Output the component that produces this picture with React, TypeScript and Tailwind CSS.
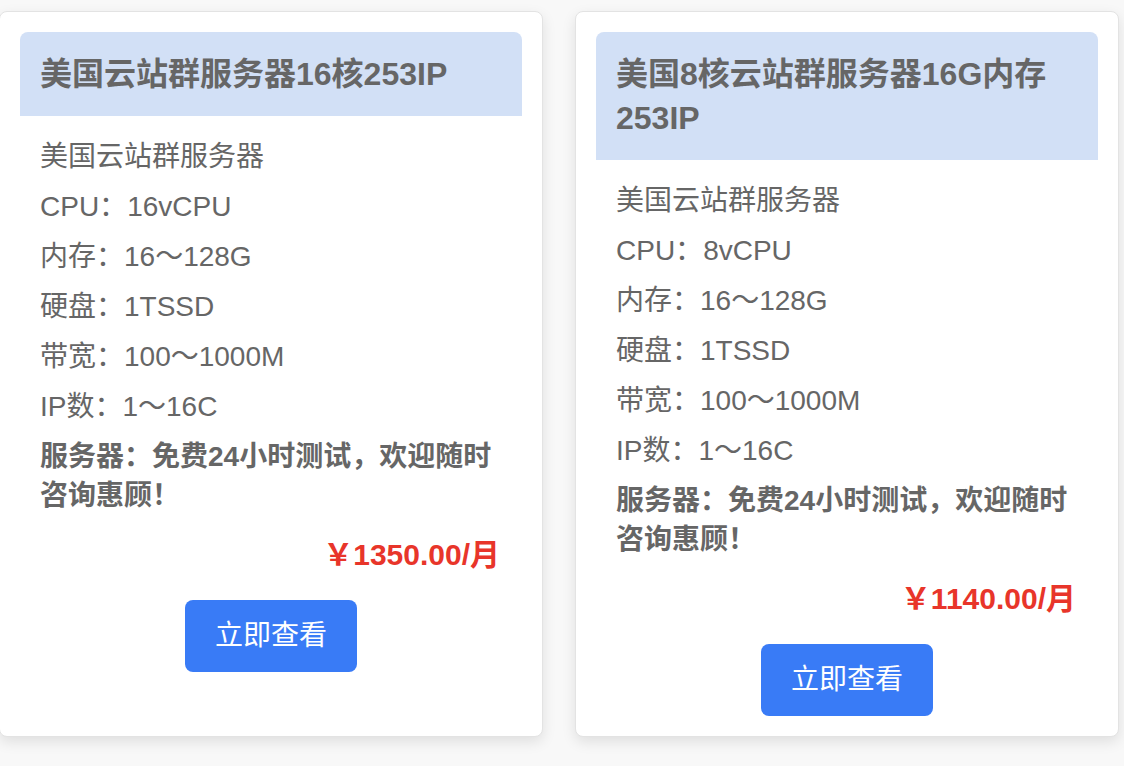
import React from "react";

type Plan = {
  title: string;
  cpu: string;
  price: string;
};

const plans: Plan[] = [
  { title: "美国云站群服务器16核253IP", cpu: "16vCPU", price: "1350.00" },
  { title: "美国8核云站群服务器16G内存253IP", cpu: "8vCPU", price: "1140.00" },
];

function PlanCard({ plan }: { plan: Plan }) {
  return (
    <div className="flex w-[544px] flex-col rounded-lg border border-[#e3e3e3] bg-white p-5 shadow-[0_5px_14px_rgba(0,0,0,0.1)]">
      <div className="rounded-t-lg bg-[#d2e0f6] p-5">
        <h3 className="text-[32px] leading-[44px] font-bold text-[#666]">{plan.title}</h3>
      </div>
      <div className="flex flex-col gap-[11px] px-5 pt-[21px] text-[28px] leading-[39px] text-[#666]">
        <p>美国云站群服务器</p>
        <p>CPU：{plan.cpu}</p>
        <p>内存：16～128G</p>
        <p>硬盘：1TSSD</p>
        <p>带宽：100～1000M</p>
        <p>IP数：1～16C</p>
        <p className="font-bold">服务器：免费24小时测试，欢迎随时咨询惠顾！</p>
      </div>
      <p className="mt-5 px-5 pr-[22px] text-right text-[30px] leading-[39px] font-bold text-[#e8352a]">
        ￥{plan.price}/月
      </p>
      <div className="mt-[26px] flex justify-center">
        <button
          type="button"
          className="flex h-[72px] w-[172px] items-center justify-center rounded-lg bg-[#397bf6] text-[28px] text-white"
        >
          立即查看
        </button>
      </div>
    </div>
  );
}

export default function App() {
  return (
    <div
      className="min-h-[766px] w-full bg-[#f8f8f8]"
      style={{ fontFamily: '"Liberation Sans", "Noto Sans CJK SC", sans-serif' }}
    >
      <div className="ml-[-1px] flex items-stretch gap-[32px] pt-[11px]">
        {plans.map((plan) => (
          <PlanCard key={plan.title} plan={plan} />
        ))}
      </div>
    </div>
  );
}
